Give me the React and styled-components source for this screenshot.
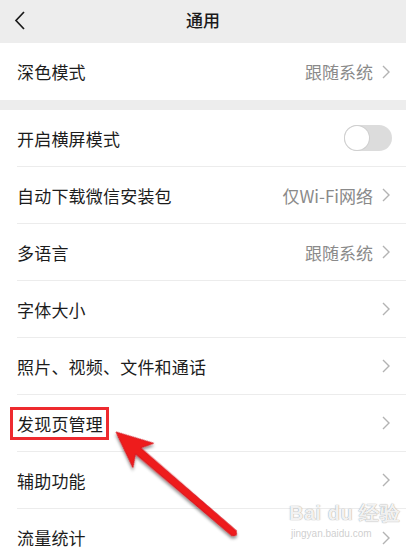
import React from 'react';
import styled, { createGlobalStyle } from 'styled-components';

const GlobalStyle = createGlobalStyle`
  html, body {
    margin: 0;
    padding: 0;
    background: #ededed;
    font-family: "Noto Sans CJK SC", "Noto Sans", sans-serif;
  }
`;

const Page = styled.div`
  position: relative;
  width: 406px;
  height: 548px;
  overflow: hidden;
  background: #ededed;
`;

const Header = styled.div`
  height: 43px;
  display: grid;
  grid-template-columns: 60px 1fr 60px;
  align-items: center;
`;

const BackButton = styled.div`
  display: flex;
  align-items: center;
  padding-left: 14px;
  margin-top: -3px;
  color: #1a1a1a;
`;

const Title = styled.div`
  text-align: center;
  font-size: 17px;
  line-height: 20px;
  font-weight: 500;
  color: #1a1a1a;
  margin-top: -3px;
`;

const Group = styled.div`
  background: #fff;
  margin-bottom: ${props => props.$gap || 0}px;
`;

const Row = styled.div`
  padding-left: 17px;
`;

const RowInner = styled.div`
  height: ${props => (props.$last ? 57 : 56)}px;
  display: flex;
  align-items: center;
  justify-content: space-between;
  padding-right: 16px;
  border-bottom: ${props => (props.$last ? 'none' : '1px solid #ececec')};
`;

const Label = styled.span`
  font-size: 17px;
  color: #1c1c1c;
  letter-spacing: 0.2px;
`;

const Highlight = styled.span`
  display: inline-block;
  margin-left: -7px;
  padding: 1px 3px 1px 4px;
  border: 3px solid #ee2a2f;
`;

const Right = styled.div`
  display: flex;
  align-items: center;
  gap: 9px;
`;

const Value = styled.span`
  font-size: 17px;
  color: #8a8a8a;
`;

const Track = styled.div`
  width: 48px;
  height: 26px;
  border-radius: 13px;
  background: #dcdcdc;
  display: flex;
  align-items: center;
  padding-left: 1px;
  box-sizing: border-box;
  margin-right: -2px;
`;

const Knob = styled.div`
  width: 24px;
  height: 24px;
  border-radius: 50%;
  background: #fff;
  box-shadow: 0 0 0 1px #cfcfcf;
`;

const ArrowLayer = styled.svg`
  position: absolute;
  left: 0;
  top: 0;
  pointer-events: none;
`;

const Watermark = styled.div`
  position: absolute;
  left: 289px;
  top: 503px;
  color: rgba(255, 255, 255, 0.9);
  text-shadow: 0 0 1px rgba(110, 110, 110, 0.5), 0 0 1px rgba(110, 110, 110, 0.5);
  font-family: "Liberation Sans", sans-serif;
  line-height: 1;
  pointer-events: none;
`;

const WmBig = styled.div`
  font-size: 20px;
  font-weight: 700;
  letter-spacing: 0.5px;
`;

const WmSmall = styled.div`
  font-size: 10px;
  margin-top: 6px;
  margin-left: 2px;
  color: rgba(190, 190, 190, 0.75);
  text-shadow: none;
`;

const Chevron = () => (
  <svg width="8" height="14" viewBox="0 0 8 14">
    <polyline points="1,1 7,7 1,13" fill="none" stroke="#b3b3b3" strokeWidth="1.4" />
  </svg>
);

const Back = () => (
  <svg width="11" height="19" viewBox="0 0 11 19">
    <polyline points="10,1 2,9.5 10,18" fill="none" stroke="#1a1a1a" strokeWidth="1.7" />
  </svg>
);

const rows = [
  { label: '开启横屏模式', toggle: true },
  { label: '自动下载微信安装包', value: '仅Wi-Fi网络' },
  { label: '多语言', value: '跟随系统' },
  { label: '字体大小' },
  { label: '照片、视频、文件和通话' },
  { label: '发现页管理', marked: true },
  { label: '辅助功能' },
  { label: '流量统计' },
];

const SettingRow = ({ label, value, toggle, marked, last }) => (
  <Row>
    <RowInner $last={last}>
      <Label>{marked ? <Highlight>{label}</Highlight> : label}</Label>
      {toggle ? (
        <Track>
          <Knob />
        </Track>
      ) : (
        <Right>
          {value && <Value>{value}</Value>}
          <Chevron />
        </Right>
      )}
    </RowInner>
  </Row>
);

export default function App() {
  return (
    <Page>
      <GlobalStyle />
      <Header>
        <BackButton>
          <Back />
        </BackButton>
        <Title>通用</Title>
        <div />
      </Header>

      <Group $gap={10}>
        <SettingRow label="深色模式" value="跟随系统" last />
      </Group>

      <Group>
        {rows.map((r, i) => (
          <SettingRow key={r.label} {...r} last={i === rows.length - 1} />
        ))}
      </Group>

      <Watermark>
        <WmBig>Bai du 经验</WmBig>
        <WmSmall>jingyan.baidu.com</WmSmall>
      </Watermark>

      <ArrowLayer width="406" height="548" viewBox="0 0 406 548">
        <defs>
          <filter id="shadow" x="-20%" y="-20%" width="140%" height="140%">
            <feDropShadow dx="1.5" dy="2" stdDeviation="1.6" floodColor="#000" floodOpacity="0.45" />
          </filter>
        </defs>
        <g transform="translate(116 432) rotate(40.6)" filter="url(#shadow)">
          <polygon
            points="0,0 36,-16 29,-4 156,-3.2 158.5,0 156,3.2 29,4 36,16"
            fill="#ee1a1e"
            stroke="#d40f14"
            strokeWidth="0.8"
            strokeLinejoin="round"
          />
        </g>
      </ArrowLayer>
    </Page>
  );
}
